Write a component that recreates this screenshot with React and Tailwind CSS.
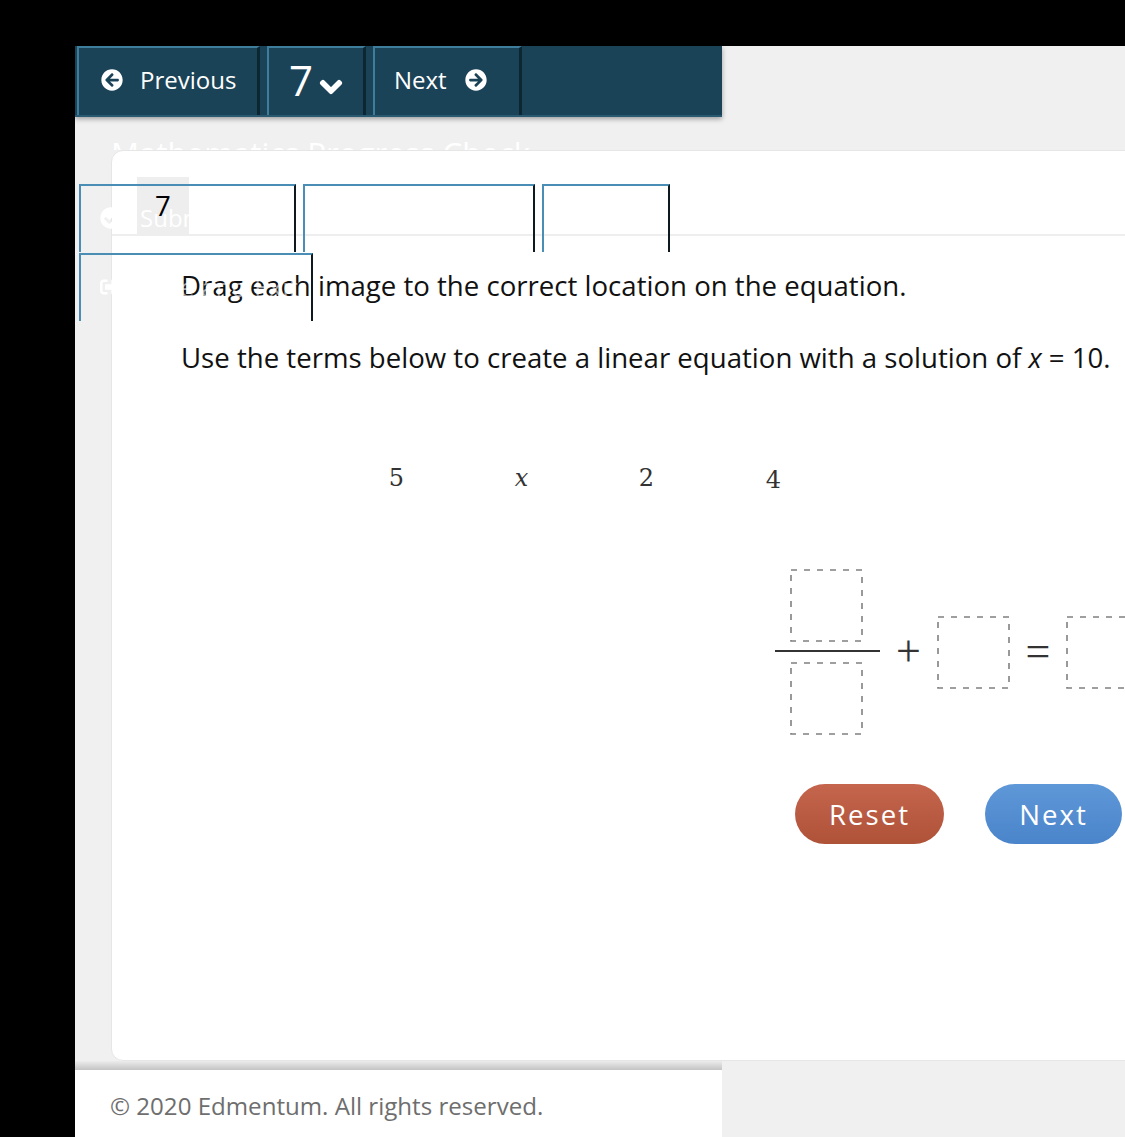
import React from 'react';
import { FaArrowCircleLeft, FaArrowCircleRight, FaChevronDown, FaCheckCircle, FaSignOutAlt } from 'react-icons/fa';

const navButton = 'flex h-[69px] items-center border-t-2 border-l-2 border-r-[3px] border-t-[#3f7d9c] border-l-[#3f7d9c] border-r-[#0c2632] pb-[4px]';

const DropBox = () => (
  <svg className="h-[73px] w-[73px] shrink-0" viewBox="0 0 73 73" fill="none">
    <rect x="1" y="1" width="71" height="71" stroke="#808080" strokeWidth="1.6" strokeDasharray="6 7" />
  </svg>
);

// leftover frames sitting on top of the page
const frames = [
  'left-[79px] top-[184px] h-[68px] w-[217px]',
  'left-[303px] top-[184px] h-[68px] w-[232px]',
  'left-[542px] top-[184px] h-[68px] w-[128px]',
  'left-[79px] top-[253px] h-[68px] w-[234px]',
];

const App = () => {
  return (
    <div className="relative h-[1137px] w-[1125px] overflow-hidden bg-black pl-[75px] pt-[46px] font-['Open_Sans',sans-serif]">
      <div className="flex h-[1091px] w-[1050px] flex-col bg-[#f0f0f0]">
        {/* Top nav */}
        <div className="flex h-[71px] w-[647px] shrink-0 gap-[7px] border-b-2 border-[#2a5a72] bg-[#1b4358] pl-[2px] shadow-[0_2px_5px_rgba(0,0,0,0.35)]">
          <button className={`${navButton} w-[183px] gap-[17px] pl-[22px] text-[24px] text-white`}>
            <FaArrowCircleLeft className="h-[22px] w-[22px]" />
            <span>Previous</span>
          </button>
          <button className={`${navButton} w-[99px] pl-[20px] text-white`}>
            <span className="text-[42px] font-normal leading-none">7</span>
            <FaChevronDown className="ml-[6px] mt-[14px] h-[24px] w-[24px]" stroke="currentColor" strokeWidth={40} />
          </button>
          <button className={`${navButton} w-[149px] gap-[18px] pl-[19px] text-[24px] text-white`}>
            <span>Next</span>
            <FaArrowCircleRight className="h-[22px] w-[22px]" />
          </button>
        </div>

        {/* Card */}
        <div className="shrink-0 pl-[36px] pt-[33px]">
          <div className="h-[911px] w-[1040px] overflow-hidden rounded-l-xl border border-[#e6e6e6] bg-white">
            <div className="h-[85px] border-b-2 border-[#eeeeee] pl-[25px] pt-[26px]">
              <div className="h-[57px] w-[52px] bg-[#eeeeee]" />
            </div>
            <div className="pl-[69px] pt-[31px] text-[27.6px] leading-[36px] text-[#111111]">
              <p className="whitespace-nowrap">Drag each image to the correct location on the equation.</p>
              <p className="mt-[36px] whitespace-nowrap">
                Use the terms below to create a linear equation with a solution of <em>x</em> = 10.
              </p>

              <div className="ml-[153px] mt-[88px] flex font-['DejaVu_Serif',serif] text-[#333333]">
                <span className="w-[125px] text-center text-[24px] leading-[30px]">5</span>
                <span className="w-[125px] text-center text-[24px] italic leading-[30px]">x</span>
                <span className="w-[125px] text-center text-[24px] leading-[30px]">2</span>
                <span className="w-[129px] text-center text-[24px] leading-[34px]">4</span>
              </div>

              <div className="ml-[594px] mt-[72px] flex w-[400px] items-center">
                <div className="flex w-[105px] shrink-0 flex-col items-start">
                  <div className="ml-[15px] flex"><DropBox /></div>
                  <div className="mb-[10px] mt-[8px] h-[2px] w-[105px] bg-[#333333]" />
                  <div className="ml-[15px] flex"><DropBox /></div>
                </div>
                <span className="w-[57px] shrink-0 text-center font-['Liberation_Serif',serif] text-[44px] leading-none text-[#333333]">+</span>
                <DropBox />
                <span className="w-[56px] shrink-0 text-center font-['Liberation_Serif',serif] text-[44px] leading-none text-[#333333]">=</span>
                <DropBox />
              </div>

              <div className="ml-[614px] mt-[49px] flex gap-[41px] text-[27.6px] tracking-[2px] text-white [text-shadow:0_1px_2px_rgba(0,0,0,0.45)]">
                <button className="h-[60px] w-[149px] rounded-full bg-linear-to-b from-[#c5654d] to-[#ae5238]">Reset</button>
                <button className="h-[60px] w-[137px] rounded-full bg-linear-to-b from-[#5f98d8] to-[#4a84ca]">Next</button>
              </div>
            </div>
          </div>
        </div>

        {/* Footer */}
        <div className="h-[9px] w-[647px] shrink-0 bg-linear-to-b from-[#ececec] to-[#c4c4c4]" />
        <div className="flex h-[67px] w-[647px] shrink-0 items-center bg-white pl-[35px] pt-[5px] text-[24.1px] text-[#6e6e6e]">
          © 2020 Edmentum. All rights reserved.
        </div>
      </div>

      {/* Title stuck behind the card, only its top shows */}
      <div className="absolute left-[111px] top-[117px] h-[33px] w-[440px] overflow-hidden">
        <span className="absolute left-0 top-[13px] whitespace-nowrap text-[31.2px] text-white">Mathematics Progress Check</span>
      </div>

      {/* Stray sidebar items over the card */}
      <div className="absolute left-[100px] top-[200px] flex items-center gap-[18px] text-[24px] leading-[36px] text-white">
        <FaCheckCircle className="h-[22px] w-[22px]" />
        <span>Submit</span>
      </div>
      <div className="absolute left-[100px] top-[269px] flex items-center gap-[18px] text-[26px] leading-[36px] text-white/60">
        <FaSignOutAlt className="h-[20px] w-[20px] text-white" />
        <span className="whitespace-nowrap">Save and Exit</span>
      </div>

      {frames.map((frame, index) => (
        <div
          key={index}
          className={`absolute ${frame} border-l-2 border-r-2 border-t-2 border-l-[#4a8db5] border-r-[#0f1a20] border-t-[#4a8db5]`}
        />
      ))}

      <span className="absolute left-[155px] top-[187px] text-[27.6px] leading-[36px] text-black">7</span>
    </div>
  );
};

export default App;
